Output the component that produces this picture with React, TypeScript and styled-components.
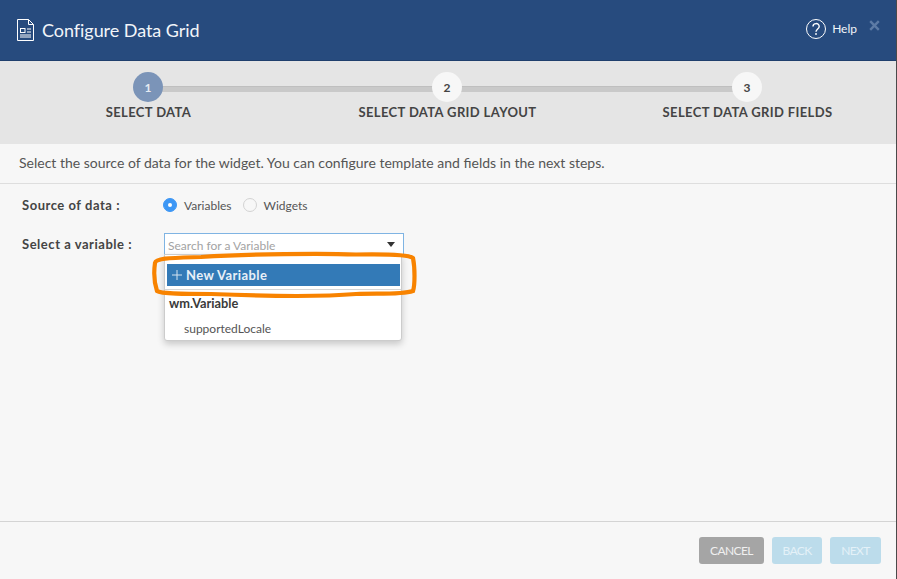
import React from 'react'
import styled, { createGlobalStyle } from 'styled-components'

const GlobalStyle = createGlobalStyle`
  html, body {
    margin: 0;
    padding: 0;
    background: #f7f7f7;
  }
  body {
    font-family: Lato, "Open Sans", sans-serif;
    overflow: hidden;
  }
`

const Dialog = styled.div`
  width: 897px;
  height: 579px;
  box-sizing: border-box;
  border-right: 1px solid #4a4a4a;
  display: flex;
  flex-direction: column;
  background: #f7f7f7;
  color: #444;
`

const Header = styled.header`
  height: 61px;
  box-sizing: border-box;
  flex: none;
  display: flex;
  align-items: center;
  padding: 0 16px 0 17px;
  background: #274b7e;
  border-bottom: 1px solid #1f3f6d;
  color: #fff;
`

const Title = styled.h1`
  margin: 0 0 0 8px;
  font-size: 18px;
  font-weight: 400;
  letter-spacing: -0.05px;
  color: #f2f5f9;
  flex: 1;
`

const HelpLink = styled.div`
  display: flex;
  align-items: center;
  gap: 6px;
  font-size: 12px;
  color: #f2f5f9;
  margin-right: 12px;
  margin-top: -3px;
`

const CloseMark = styled.svg`
  width: 11px;
  height: 11px;
  margin-top: -10px;
`

const Stepper = styled.div`
  position: relative;
  height: 83px;
  flex: none;
  display: grid;
  grid-template-columns: 296px 302px 298px;
  background: #e5e5e5;

  &::before {
    content: '';
    position: absolute;
    left: 147px;
    width: 600px;
    top: 25px;
    height: 6px;
    background: #c9c9c9;
    border-top: 1px solid #bfbfbf;
    box-sizing: border-box;
  }
`

const Step = styled.div`
  position: relative;
  display: flex;
  flex-direction: column;
  align-items: center;
  padding-top: 11px;
`

const StepCircle = styled.div<{ $active?: boolean }>`
  width: 30px;
  height: 30px;
  border-radius: 50%;
  display: flex;
  align-items: center;
  justify-content: center;
  font-size: 12px;
  font-weight: 700;
  background: ${({ $active }) => ($active ? '#7b94b8' : '#f7f7f7')};
  color: ${({ $active }) => ($active ? '#e6ebf2' : '#444')};
`

const StepLabel = styled.div`
  margin: 2px 0 0 1px;
  font-size: 13px;
  line-height: 16px;
  font-weight: 700;
  letter-spacing: 0.37px;
  color: #444;
  white-space: nowrap;
`

const Intro = styled.p`
  margin: 0;
  height: 40px;
  flex: none;
  box-sizing: border-box;
  padding: 0 19px 2px;
  display: flex;
  align-items: center;
  font-size: 14px;
  color: #555;
  border-bottom: 1px solid #dedede;
`

const Body = styled.main`
  flex: 1;
  display: flex;
  flex-direction: column;
  gap: 19px;
  padding: 12px 22px 0;
`

const Row = styled.div`
  display: flex;
  align-items: center;
`

const FieldLabel = styled.label`
  width: 142px;
  flex: none;
  font-size: 13px;
  line-height: 18px;
  font-weight: 700;
  letter-spacing: 0.53px;
  color: #444;
`

const RadioGroup = styled.div`
  display: flex;
  align-items: center;
  height: 18px;
  margin-left: -1px;
`

const RadioDot = styled.span<{ $checked?: boolean }>`
  width: 14px;
  height: 14px;
  box-sizing: border-box;
  border-radius: 50%;
  display: inline-flex;
  align-items: center;
  justify-content: center;
  background: ${({ $checked }) => ($checked ? '#3d97f5' : '#f7f7f7')};
  border: 1px solid ${({ $checked }) => ($checked ? '#3d97f5' : '#d3d3d3')};

  &::after {
    content: '';
    width: 4px;
    height: 4px;
    border-radius: 50%;
    background: #fff;
    display: ${({ $checked }) => ($checked ? 'block' : 'none')};
  }
`

const RadioText = styled.span`
  font-size: 12px;
  color: #555;
  margin: 0 11px 0 7px;
`

const SelectWrap = styled.div`
  position: relative;
  width: 240px;
`

const SelectInput = styled.div`
  height: 22px;
  box-sizing: border-box;
  background: #fff;
  border: 1px solid #7fb4e3;
  padding: 2px 3px 0;
  display: flex;
  align-items: center;
  justify-content: space-between;
  font-size: 12px;
  color: #a3a3a3;
`

const Caret = styled.span`
  width: 0;
  height: 0;
  border-left: 4.500px solid transparent;
  border-right: 4.500px solid transparent;
  border-top: 5px solid #333;
  margin-right: 5px;
  margin-top: -1px;
`

const Menu = styled.div`
  position: absolute;
  top: 21px;
  left: 0;
  width: 238px;
  height: 87px;
  box-sizing: border-box;
  background: #fff;
  border: 1px solid #ccc;
  border-radius: 0 0 3px 3px;
  box-shadow: 0 3px 7px rgba(0, 0, 0, 0.2);
  padding-top: 9px;
`

const NewVariable = styled.div`
  height: 22px;
  margin: 0 1px 0 2px;
  display: flex;
  align-items: center;
  padding-left: 5px;
  gap: 4px;
  background: #337ab7;
  color: #e8f0f8;
  font-size: 13px;
  font-weight: 700;
  letter-spacing: 0.4px;
`

const Divider = styled.div`
  height: 1px;
  background: #d5d5d5;
  margin-top: 3px;
`

const GroupName = styled.div`
  font-size: 12.800px;
  font-weight: 700;
  line-height: 14px;
  color: #3a3a3a;
  padding: 6px 0 0 4px;
`

const MenuItem = styled.div`
  font-size: 12px;
  line-height: 14px;
  color: #555;
  padding: 12px 0 0 19px;
`

const Highlight = styled.svg`
  position: absolute;
  left: 151px;
  top: 250px;
  width: 267px;
  height: 50px;
  pointer-events: none;
`

const Footer = styled.footer`
  height: 58px;
  box-sizing: border-box;
  flex: none;
  border-top: 1px solid #d4d4d4;
  display: flex;
  justify-content: flex-end;
  align-items: flex-start;
  gap: 8px;
  padding: 15px 15px 0 0;
`

const ActionButton = styled.button<{ $width: number; $muted?: boolean }>`
  width: ${({ $width }) => $width}px;
  height: 27px;
  border: none;
  border-radius: 3px;
  padding: 0;
  font-family: inherit;
  font-size: 12px;
  letter-spacing: -0.6px;
  color: ${({ $muted }) => ($muted ? '#f0f0f0' : '#e4f1f8')};
  background: ${({ $muted }) => ($muted ? '#a5a5a5' : '#bcdceb')};
`

export default function App() {
  return (
    <>
      <GlobalStyle />
      <Dialog>
        <Header>
          <svg width="17" height="22" viewBox="0 0 17 22" fill="none" stroke="#fff" strokeWidth="1">
            <path d="M.5.5h11l5 5v16H.5z" />
            <path d="M11.500.5v5h5" />
            <rect x="3.500" y="9.500" width="4.500" height="4" />
            <path d="M10 10h4M10 13h4M3 16h11M3 18h11" />
          </svg>
          <Title>Configure Data Grid</Title>
          <HelpLink>
            <svg width="20" height="20" viewBox="0 0 20 20" fill="none" stroke="#fff">
              <circle cx="10" cy="10" r="9.500" />
              <path d="M7 7.600c0-4 6.200-4 6.200-.2 0 2.600-3.200 2.600-3.200 5.400" strokeWidth="1.400" />
              <circle cx="10" cy="15" r=".9" fill="#fff" stroke="none" />
            </svg>
            Help
          </HelpLink>
          <CloseMark viewBox="0 0 11 11">
            <path d="M1.200 1.200l8.600 8.600M9.800 1.200l-8.600 8.600" stroke="#5d7ba5" strokeWidth="2.400" />
          </CloseMark>
        </Header>

        <Stepper>
          <Step>
            <StepCircle $active>1</StepCircle>
            <StepLabel>SELECT DATA</StepLabel>
          </Step>
          <Step>
            <StepCircle>2</StepCircle>
            <StepLabel>SELECT DATA GRID LAYOUT</StepLabel>
          </Step>
          <Step>
            <StepCircle>3</StepCircle>
            <StepLabel>SELECT DATA GRID FIELDS</StepLabel>
          </Step>
        </Stepper>

        <Intro>Select the source of data for the widget. You can configure template and fields in the next steps.</Intro>

        <Body>
          <Row>
            <FieldLabel>Source of data :</FieldLabel>
            <RadioGroup>
              <RadioDot $checked />
              <RadioText>Variables</RadioText>
              <RadioDot />
              <RadioText>Widgets</RadioText>
            </RadioGroup>
          </Row>
          <Row>
            <FieldLabel>Select a variable :</FieldLabel>
            <SelectWrap>
              <SelectInput>
                Search for a Variable
                <Caret />
              </SelectInput>
              <Menu>
                <NewVariable>
                  <svg width="10" height="10" viewBox="0 0 10 10" stroke="#d5e3f0" strokeWidth="1">
                    <path d="M5 0v10M0 5h10" />
                  </svg>
                  New Variable
                </NewVariable>
                <Divider />
                <GroupName>wm.Variable</GroupName>
                <MenuItem>supportedLocale</MenuItem>
              </Menu>
            </SelectWrap>
          </Row>
        </Body>

        <Footer>
          <ActionButton $width={65} $muted>CANCEL</ActionButton>
          <ActionButton $width={50}>BACK</ActionButton>
          <ActionButton $width={51}>NEXT</ActionButton>
        </Footer>
      </Dialog>

      <Highlight viewBox="0 0 267 50" fill="none">
        <path
          d="M4 13C5 8 20 8 50 7C100 4 170 3 205 4.500C232 4 258 4.500 262 8C264 18 264 35 262 41C250 45 225 43 205 44C170 47 110 46 60 44C35 44 10 44 6 41C3 32 3 20 4 13Z"
          stroke="#f88300"
          strokeWidth="4.200"
        />
      </Highlight>
    </>
  )
}
